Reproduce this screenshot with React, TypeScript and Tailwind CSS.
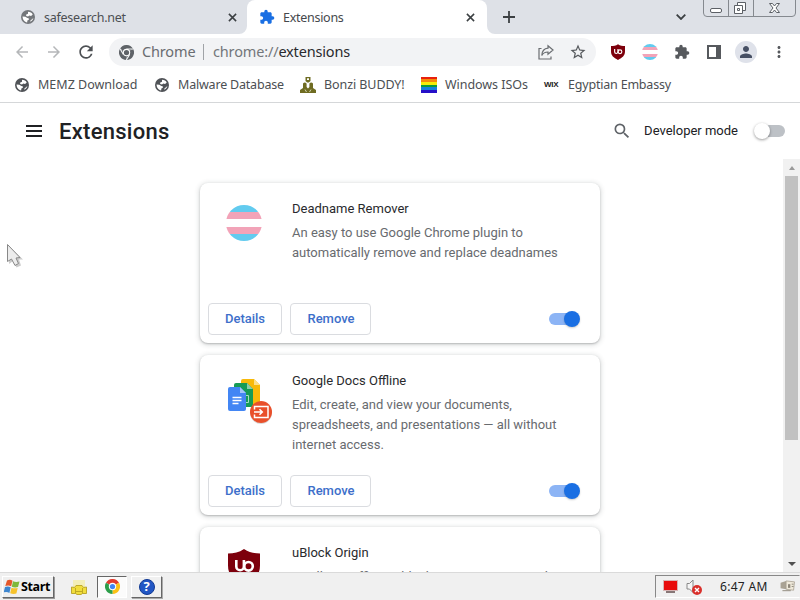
import type { ReactNode } from 'react'
import { MdArrowBack, MdArrowForward, MdExtension, MdMoreVert, MdPerson, MdRefresh, MdSearch, MdStarBorder } from 'react-icons/md'

const ShieldIcon = ({ className }: { className: string }) => (
  <svg viewBox="0 0 32 36" className={className}>
    <path d="M16 0c5 3.400 10 4.500 16 4.500v12c0 10-6 15-16 19.500C6 31.500 0 26.500 0 16.500v-12c6 0 11-1.100 16-4.500z" fill="#7d000c" />
    <path d="M8.300 11v6.500a3.800 3.800 0 0 0 7.600 0V11" fill="none" stroke="#fff" strokeWidth="2.600" />
    <circle cx="20.500" cy="17.300" r="4.300" fill="none" stroke="#fff" strokeWidth="2.600" />
  </svg>
)

const FlagIcon = ({ className }: { className: string }) => (
  <div className={`flex flex-col overflow-hidden rounded-full ${className}`}>
    <div className="flex-1 bg-[#62cbef]" />
    <div className="flex-1 bg-[#f2a3b8]" />
    <div className="flex-1 bg-white" />
    <div className="flex-1 bg-[#f2a3b8]" />
    <div className="flex-1 bg-[#62cbef]" />
  </div>
)

const GlobeIcon = ({ className }: { className: string }) => (
  <svg viewBox="0 0 16 16" className={className}>
    <circle cx="8" cy="8" r="8" fill="currentColor" />
    <path d="M8 2c2.500 0 4.500 1.200 5.400 3l-1.900 1.800-2-.500-1.500 1-2-.500-.300-1.500L8 4.300z" fill="#fff" />
    <path d="M1.800 7.500l3.200.300 2.200 1.200 1.600.500.200 1.500-1.700 1-.300 2.200C4.200 14 1.800 11 1.800 7.500z" fill="#fff" />
    <path d="M14.200 9a6.300 6.300 0 0 1-3.700 4.700l.700-2z" fill="#fff" />
  </svg>
)

const DocsIcon = () => (
  <svg viewBox="0 0 48 48" className="h-12 w-12">
    <path d="M17 2h11l6 6v20H17a2 2 0 0 1-2-2V4a2 2 0 0 1 2-2z" fill="#f7b90a" />
    <path d="M28 2l6 6h-6z" fill="#fbdf8d" />
    <path d="M10 6h11l6 6v18H10a2 2 0 0 1-2-2V8a2 2 0 0 1 2-2z" fill="#159b57" />
    <path d="M21 6l6 6h-6z" fill="#8acdaa" />
    <path d="M19 18.500h3.500v7H19" fill="none" stroke="#a9dcc2" strokeWidth="1" />
    <path d="M4 10h10l6 6v16a2 2 0 0 1-2 2H4a2 2 0 0 1-2-2V12a2 2 0 0 1 2-2z" fill="#4386f4" />
    <path d="M14 10l6 6h-6z" fill="#a3c4fa" />
    <path d="M6.500 20.500h9M6.500 23.500h9M6.500 26.500h6" stroke="#fff" strokeWidth="1.300" />
    <circle cx="35" cy="36" r="11" fill="#d9d9d9" />
    <circle cx="35" cy="35" r="11" fill="#e9502b" />
    <path d="M28.500 32.500V29.500h13.500v11H28.500V37.500M28 35h8M33.500 32.300l2.800 2.700-2.800 2.700" fill="none" stroke="#fff" strokeWidth="1.500" />
  </svg>
)

const ChromeIcon = ({ mono = false }: { mono?: boolean }) => (
  <svg viewBox="0 0 24 24" className="h-[15px] w-[15px] shrink-0">
    <path d="M12 12L1.600 6A12 12 0 0 1 22.400 6z" fill={mono ? '#5f6368' : '#e33b2e'} />
    <path d="M12 12L22.400 6A12 12 0 0 1 12 24z" fill={mono ? '#5f6368' : '#fbc116'} />
    <path d="M12 12L12 24A12 12 0 0 1 1.600 6z" fill={mono ? '#5f6368' : '#2d9f4b'} />
    {mono && <path d="M12 6.300h11M7 15L1.700 6M17 15l-5.300 9" stroke="#f1f3f4" strokeWidth="1.800" />}
    <circle cx="12" cy="12" r="5.900" fill="#fff" />
    <circle cx="12" cy="12" r="4.200" fill={mono ? '#5f6368' : '#4285f4'} />
  </svg>
)

const CloseIcon = () => (
  <svg viewBox="0 0 10 10" className="h-[9px] w-[9px] shrink-0">
    <path d="M1 1l8 8M9 1L1 9" stroke="#3c4043" strokeWidth="1.700" />
  </svg>
)

const BonziIcon = () => (
  <svg viewBox="0 0 16 16" className="h-4 w-4 shrink-0">
    <path d="M5.500 0h5v4L8.800 5.500H7.200L5.500 4z" fill="#6f6c22" />
    <path d="M7 1.300h2v1.800H7z" fill="#fff" />
    <path d="M3 6.500q1.800-2 3.600 0V10L8 11.500 9.400 10V6.500q1.800-2 3.600 0V11l3 2v3H0v-3l3-2z" fill="#6f6c22" />
    <path d="M5 12.500L6.500 15M11 12.500L9.500 15" stroke="#dcdcc0" strokeWidth=".900" />
  </svg>
)

const RainbowIcon = () => (
  <div className="flex h-4 w-4 shrink-0 flex-col">
    <div className="flex-1 bg-[#e8200c]" />
    <div className="flex-1 bg-[#f58a0a]" />
    <div className="flex-1 bg-[#f5ec0a]" />
    <div className="flex-1 bg-[#0a9a3c]" />
    <div className="flex-1 bg-[#1480e0]" />
    <div className="flex-1 bg-[#2510c8]" />
  </div>
)

const TabStrip = () => (
  <div className="flex h-[34px] bg-[#dee1e7]">
    <div className="flex w-[247px] items-center pl-[21px] pr-[10px]">
      <GlobeIcon className="h-[14px] w-[14px] text-[#74777b]" />
      <span className="ml-[9px] flex-1 pt-[2px] text-[12.500px] tracking-[-0.280px] text-[#4c4f53]">safesearch.net</span>
      <CloseIcon />
    </div>
    <div className="relative flex w-[240px] items-center rounded-t-lg bg-white pl-3 pr-[12px]">
      <svg viewBox="0 0 8 8" className="absolute -left-2 bottom-0 h-2 w-2"><path d="M8 0v8H0a8 8 0 0 0 8-8z" fill="#fff" /></svg>
      <svg viewBox="0 0 8 8" className="absolute -right-2 bottom-0 h-2 w-2"><path d="M0 0v8h8a8 8 0 0 1-8-8z" fill="#fff" /></svg>
      <MdExtension className="h-4 w-4 text-[#1a6fe3]" />
      <span className="ml-2 flex-1 pt-[2px] text-[12.500px] tracking-[-0.280px] text-[#45484c]">Extensions</span>
      <CloseIcon />
    </div>
    <svg viewBox="0 0 12 12" className="ml-4 mt-[11px] h-3 w-3"><path d="M6 0v12M0 6h12" stroke="#3c4043" strokeWidth="1.800" /></svg>
    <svg viewBox="0 0 10 6" className="ml-[161px] mt-[14px] h-[6px] w-[10px]"><path d="M.700.700L5 5 9.300.700" fill="none" stroke="#3c4043" strokeWidth="1.800" /></svg>
    <svg viewBox="0 0 94 18" className="ml-[17px] h-[18px] w-[94px]" fill="none" stroke="#85898f">
      <path d="M.500 0v13q0 3.500 3.500 3.500h85q3.500 0 3.500-3.500V0M25.500 0v16M50.500 0v16" />
      <rect x="7.500" y="8.500" width="11" height="4" rx="1.500" fill="#fff" stroke="#5c6066" />
      <g fill="#fff" stroke="#5c6066">
        <path d="M34.500 2.500h8v8h-8z" />
        <path d="M31.500 5.500h8v8h-8z" />
        <path d="M34.500 8.500h2v2h-2z" />
      </g>
      <path d="M66.500 3.500h3l2 2.500 2-2.500h3l-3.500 4.500 3.500 4.500h-3l-2-2.500-2 2.500h-3L70 8z" fill="#fff" stroke="#5c6066" />
    </svg>
  </div>
)

const Toolbar = () => (
  <div className="flex h-9 items-center pl-[13px]">
    <MdArrowBack className="h-[18px] w-[18px] text-[#b5b7b9]" />
    <MdArrowForward className="ml-[14px] h-[18px] w-[18px] text-[#b5b7b9]" />
    <MdRefresh className="ml-[13px] h-5 w-5 text-[#4d5054]" />
    <div className="ml-[13px] flex h-[28px] w-[487px] items-center rounded-full bg-[#f2f3f5] pl-[10px]">
      <ChromeIcon mono />
      <span className="ml-2 w-[61px] text-[14.500px] tracking-[-0.150px] text-[#6a6d71]">Chrome</span>
      <div className="h-4 w-px bg-[#a0a3a7]" />
      <span className="ml-[9px] w-[325px] text-[14.500px] tracking-[-0.160px] text-[#74777b]">chrome://<span className="text-[#292a2d]">extensions</span></span>
      <svg viewBox="0 0 16 16" className="h-4 w-4 shrink-0" fill="none" stroke="#6a6d71" strokeWidth="1.200">
        <path d="M3.500 4.500H1V15h12v-2.500M10 1.800L15 6l-5 4.200V8C7 8 5 9 3.800 11.500 4 7.500 6 4.500 10 4.200z" />
      </svg>
      <MdStarBorder className="ml-[15px] h-[18px] w-[18px] shrink-0 text-[#56595d]" />
    </div>
    <ShieldIcon className="ml-[15px] h-4 w-[14px]" />
    <FlagIcon className="ml-[17px] h-4 w-4" />
    <MdExtension className="ml-4 h-4 w-4 text-[#56595d]" />
    <svg viewBox="0 0 14 14" className="ml-[17px] h-[14px] w-[14px]"><path d="M1 1h12v12H1z" fill="none" stroke="#56595d" strokeWidth="2" /><path d="M9 1h4v12H9z" fill="#56595d" /></svg>
    <div className="ml-[14px] flex h-[22px] w-[22px] items-center justify-center rounded-full bg-[#dfe2ea]">
      <MdPerson className="h-[18px] w-[18px] text-[#475064]" />
    </div>
    <MdMoreVert className="ml-[13px] h-[18px] w-[18px] text-[#56595d]" />
  </div>
)

const Bookmark = ({ icon, label, className }: { icon: ReactNode, label: string, className: string }) => (
  <div className={`flex items-center whitespace-nowrap ${className}`}>
    <div className="flex w-6 shrink-0">{icon}</div>
    <span className="pt-[2px]">{label}</span>
  </div>
)

const Bookmarks = () => (
  <div className="flex h-[33px] items-center border-b border-[#d5d7d9] pb-[3px] pl-[14px] text-[12.500px] text-[#4c4f53]">
    <Bookmark className="w-[140px]" label="MEMZ Download" icon={<GlobeIcon className="ml-px h-[14px] w-[14px] text-[#505357]" />} />
    <Bookmark className="w-[146px] tracking-[-0.200px]" label="Malware Database" icon={<GlobeIcon className="ml-px h-[14px] w-[14px] text-[#505357]" />} />
    <Bookmark className="w-[121px] tracking-[-0.080px]" label="Bonzi BUDDY!" icon={<BonziIcon />} />
    <Bookmark className="w-[123px] tracking-[-0.050px]" label="Windows ISOs" icon={<RainbowIcon />} />
    <Bookmark
      className="tracking-[-0.200px]"
      label="Egyptian Embassy"
      icon={<span className="font-['Liberation_Sans',sans-serif] text-[8px] font-bold leading-[10px] tracking-[-0.200px] text-[#222]">WIX</span>}
    />
  </div>
)

const PageHeader = () => (
  <div className="flex h-14 items-center pl-[25px] pr-[14px] font-['Roboto',sans-serif] text-[#202124]">
    <svg viewBox="0 0 18 12" className="h-3 w-[18px]"><path d="M1 1h16M1 6h16M1 11h16" stroke="#202124" strokeWidth="2" /></svg>
    <h1 className="ml-4 flex-1 text-[22px] font-medium tracking-[0.280px]">Extensions</h1>
    <MdSearch className="h-5 w-5 text-[#5f6368]" />
    <span className="ml-[12px] text-[13px]">Developer mode</span>
    <div className="ml-4 flex w-8 items-center">
      <div className="z-10 h-4 w-4 rounded-full bg-white shadow-[0_1px_3px_rgba(0,0,0,0.4)]" />
      <div className="-ml-2 h-3 w-[23px] rounded-full bg-[#bdc1c6]" />
    </div>
  </div>
)

type ExtensionProps = {
  name: string,
  lines: string[],
  icon: ReactNode
}

const ExtensionCard = ({ name, lines, icon }: ExtensionProps) => (
  <div className="flex h-40 w-[400px] shrink-0 flex-col rounded-lg bg-white shadow-[0_1px_2px_rgba(60,64,67,0.3),0_1px_4px_2px_rgba(60,64,67,0.12)]">
    <div className="flex h-[120px]">
      <div className="w-[92px] shrink-0 pl-[26px] pt-[22px]">{icon}</div>
      <div className="pt-4 text-[13px] leading-5">
        <p className="mb-1 text-[#292a2d]">{name}</p>
        {lines.map(line => (<p key={line} className="whitespace-nowrap text-[#686b6f]">{line}</p>))}
      </div>
    </div>
    <div className="flex items-center gap-2 pl-2 pr-5 text-[13px] font-medium text-[#3d6fca]">
      <button className="h-8 w-[74px] rounded border border-[#dadce0]">Details</button>
      <button className="h-8 w-[81px] rounded border border-[#dadce0] pl-px">Remove</button>
      <div className="ml-auto flex items-center">
        <div className="h-3 w-[23px] rounded-full bg-[#8cb4f5]" />
        <div className="-ml-2 h-4 w-4 rounded-full bg-[#1a6fe3] shadow-[0_1px_2px_rgba(0,0,0,0.2)]" />
      </div>
    </div>
  </div>
)

const Scrollbar = () => (
  <div className="flex w-[17px] flex-col items-center bg-[#f1f1f1]">
    <div className="flex h-[17px] items-center"><div className="border-x-[3.500px] border-b-4 border-x-transparent border-b-[#9a9a9a]" /></div>
    <div className="h-[264px] w-[13px] bg-[#c1c1c1]" />
    <div className="mt-auto flex h-[17px] items-center"><div className="border-x-4 border-t-4 border-x-transparent border-t-[#505050]" /></div>
  </div>
)

const StartButton = () => (
  <div className="flex h-[22px] w-[52px] items-center gap-px border border-b-[#666] border-l-white border-r-[#666] border-t-white bg-[#efefef] pl-px shadow-[1px_1px_0_#999]">
    <svg viewBox="0 0 16 16" className="h-4 w-4 shrink-0">
      <path d="M3 1.500q3-1.500 5.500.200L7.200 7.300Q4.500 5.800 1.300 7z" fill="#e4572a" />
      <path d="M9 2.300q3 1.200 6.500.200L14 8q-3 1-6.200-.200z" fill="#7db83a" />
      <path d="M1 8q3-1.200 5.700.200L5.400 14Q3 12.300-.400 13.500z" fill="#3d86cf" />
      <path d="M7.500 8.700q2.800 1.200 6.200.200L12.400 14.500q-3 1-6.200-.200z" fill="#f6c22c" />
    </svg>
    <span className="pt-px font-['Open_Sans',sans-serif] text-[12.500px] font-bold tracking-[-0.400px] text-black">Start</span>
  </div>
)

const Taskbar = () => (
  <div className="flex h-7 items-center border-t border-[#dadada] bg-[#f0f0f0] pl-[2px]">
    <StartButton />
    <svg viewBox="0 0 16 16" className="ml-[17px] h-4 w-4">
      <path d="M2 1h12v7H2z" fill="#f3eeb8" />
      <path d="M.500 8l3 .500 1.500-2h6l1.500 2 3-.500v6.500h-4L10 15.500H6l-1.500-1h-4z" fill="#f1dd3c" stroke="#b8a224" strokeWidth=".900" />
      <path d="M4.500 9v5.500M11.500 9v5.500M5 12.500h6" stroke="#b39c1c" strokeWidth=".800" />
    </svg>
    <div className="ml-[10px] flex h-[22px] w-[30px] items-center justify-center border border-b-white border-l-[#666] border-r-white border-t-[#666] bg-[#fbfbfb]">
      <ChromeIcon />
    </div>
    <div className="ml-1 flex h-[22px] w-[31px] items-center justify-center border border-b-[#666] border-l-white border-r-[#666] border-t-white shadow-[1px_1px_0_#aaa]">
      <div className="flex h-4 w-4 items-center justify-center rounded-full border border-[#123a94] bg-[#2156c4] text-[13px] font-bold leading-none text-white">?</div>
    </div>
    <div className="ml-auto flex h-[23px] w-[145px] items-center border border-b-white border-l-[#888] border-r-transparent border-t-[#888] pl-[7px]">
      <svg viewBox="0 0 15 13" className="h-[13px] w-[15px]"><path d="M0 0h15v11H0z" fill="#d8b4b4" /><path d="M1 1h13v9H1z" fill="#e80c0c" /><path d="M3 11h9v2H3z" fill="#877" /></svg>
      <svg viewBox="0 0 16 16" className="ml-2 h-4 w-4">
        <path d="M1 4.500h2.500L7 1v12.500L3.500 10H1z" fill="#f5f5f5" stroke="#888" />
        <circle cx="11" cy="11" r="5" fill="#d9302c" />
        <path d="M9 9l4 4M13 9l-4 4" stroke="#fff" strokeWidth="1.400" />
      </svg>
      <span className="ml-[18px] w-[60px] whitespace-nowrap text-[12px] tracking-[0.300px] text-[#222]">6:47 AM</span>
      <svg viewBox="0 0 16 14" className="h-[13px] w-4 shrink-0">
        <path d="M0 3l6-2v9l-6-1z" fill="#a9a294" />
        <path d="M6 1l9 1-1 9-8-1z" fill="#efe9da" stroke="#a39b8c" strokeWidth=".800" />
        <path d="M8 4.500h2.500v4H8z" fill="#8e877a" />
        <path d="M12 4.500h2M12 7h2M2 11.500h9" stroke="#8e877a" />
      </svg>
    </div>
  </div>
)

function App() {
  return (
    <div className="relative flex h-[600px] w-[800px] flex-col overflow-hidden bg-white font-['Noto_Sans',sans-serif]">
      <TabStrip />
      <Toolbar />
      <Bookmarks />
      <PageHeader />
      <div className="flex h-[413px] font-['Roboto',sans-serif]">
        <div className="flex flex-1 flex-col gap-3 overflow-hidden pl-[200px] pt-6">
          <ExtensionCard
            name="Deadname Remover"
            lines={['An easy to use Google Chrome plugin to', 'automatically remove and replace deadnames']}
            icon={<FlagIcon className="h-9 w-9" />}
          />
          <ExtensionCard
            name="Google Docs Offline"
            lines={['Edit, create, and view your documents,', 'spreadsheets, and presentations — all without', 'internet access.']}
            icon={<DocsIcon />}
          />
          <ExtensionCard
            name="uBlock Origin"
            lines={['Finally, an efficient blocker. Easy on CPU and']}
            icon={<ShieldIcon className="ml-[2px] h-9 w-8" />}
          />
        </div>
        <Scrollbar />
      </div>
      <Taskbar />
      <svg viewBox="0 0 17 25" className="absolute left-[6px] top-[243px] h-[25px] w-[17px]">
        <path d="M3 3v18l4-3 3.500 6.500 4.500-2-2-6h4z" fill="#ccc" />
        <path d="M1.500 1.500v17l4-2.500 3.500 6.500 3.500-2-2.500-5.500 4-.500z" fill="#ececec" stroke="#888" strokeWidth="1" />
      </svg>
    </div>
  )
}

export default App
